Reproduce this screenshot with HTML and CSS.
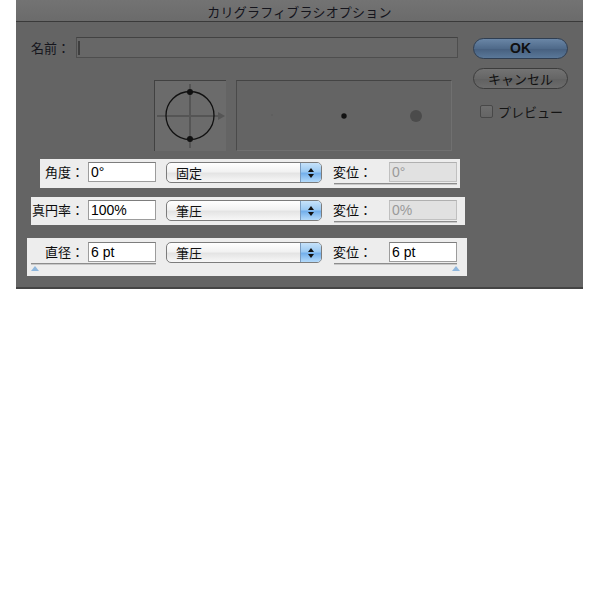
FILE: index.html
```html
<!DOCTYPE html>
<html lang="ja">
<head>
<meta charset="utf-8">
<title>カリグラフィブラシオプション</title>
<link rel="stylesheet" href="styles.css">
</head>
<body>
<div class="dialog">
  <div class="titlebar">カリグラフィブラシオプション</div>
  <div class="upper">
    <div class="left">
      <div class="name-row">
        <span class="name-label">名前：</span>
        <div class="name-input"><span class="caret"></span></div>
      </div>
      <div class="previews">
        <div class="pv pv-angle">
          <svg width="72" height="71" viewBox="0 0 72 71">
            <line x1="3" y1="36" x2="66" y2="36" stroke="#555" stroke-width="2"/>
            <polygon points="64,32 71,36 64,40" fill="#555"/>
            <line x1="36" y1="4" x2="36" y2="68" stroke="#555" stroke-width="2"/>
            <circle cx="36" cy="35.5" r="24" fill="none" stroke="#111" stroke-width="1.3"/>
            <circle cx="36" cy="12" r="3" fill="#111"/>
            <circle cx="36" cy="59" r="3" fill="#111"/>
          </svg>
        </div>
        <div class="pv pv-dots">
          <svg width="216" height="71" viewBox="0 0 216 71">
            <circle cx="36" cy="35" r="0.8" fill="#5a5a5a"/>
            <circle cx="108" cy="36" r="2.7" fill="#111"/>
            <circle cx="180" cy="36" r="6" fill="#4b4b4b"/>
          </svg>
        </div>
      </div>
    </div>
    <div class="side">
      <div class="btn btn-ok">OK</div>
      <div class="btn btn-cancel">キャンセル</div>
      <label class="preview-check"><span class="checkbox"></span>プレビュー</label>
    </div>
  </div>

  <div class="param param-angle">
    <span class="plabel">角度：</span>
    <div class="field">0°</div>
    <div class="select"><span class="sel-text">固定</span><span class="stepper"><span class="up"></span><span class="down"></span></span></div>
    <div class="group">
      <div class="group-line">
        <span class="vlabel">変位：</span>
        <div class="field disabled">0°</div>
      </div>
      <div class="track"></div>
    </div>
  </div>

  <div class="param param-round">
    <span class="plabel">真円率：</span>
    <div class="field">100%</div>
    <div class="select"><span class="sel-text">筆圧</span><span class="stepper"><span class="up"></span><span class="down"></span></span></div>
    <div class="group">
      <div class="group-line">
        <span class="vlabel">変位：</span>
        <div class="field disabled">0%</div>
      </div>
      <div class="track"></div>
    </div>
  </div>

  <div class="param param-diam">
    <div class="lgroup">
      <div class="group-line">
        <span class="plabel">直径：</span>
        <div class="field">6 pt</div>
      </div>
      <div class="track ltrack"></div>
      <span class="thumb thumb-left"></span>
    </div>
    <div class="select"><span class="sel-text">筆圧</span><span class="stepper"><span class="up"></span><span class="down"></span></span></div>
    <div class="group">
      <div class="group-line">
        <span class="vlabel">変位：</span>
        <div class="field">6 pt</div>
      </div>
      <div class="track"></div>
      <span class="thumb thumb-right"></span>
    </div>
  </div>
</div>
</body>
</html>
```

FILE: styles.css
```css
html, body {
  margin: 0;
  padding: 0;
  background: #ffffff;
}

body {
  font-family: "Noto Sans CJK JP", "Liberation Sans", sans-serif;
  font-size: 13px;
  color: #111;
}

.dialog {
  margin-left: 16px;
  width: 567px;
  background: #646464;
  padding-bottom: 11px;
  border-bottom: 2px solid #444;
}

.titlebar {
  height: 21px;
  line-height: 23px;
  border-bottom: 1px solid #3a3a3a;
  background: linear-gradient(#737373, #6b6b6b);
  text-align: center;
  font-size: 13px;
  color: #14141c;
  letter-spacing: 0.2px;
}

.upper {
  display: flex;
  padding: 15px 15px 0 15px;
}

.left {
  width: 427px;
  flex-shrink: 0;
}

.name-row {
  display: flex;
  align-items: center;
  height: 21px;
}

.name-label {
  width: 45px;
  flex-shrink: 0;
  color: #15151c;
  line-height: 21px;
}

.name-input {
  flex: 1;
  height: 19px;
  border: 1px solid #4e4e4e;
  border-top-color: #424242;
  background: #676767;
  display: flex;
  align-items: center;
}

.caret {
  width: 2px;
  height: 14px;
  margin-left: 1px;
  background: #3e3e3e;
}

.previews {
  display: flex;
  margin-top: 22px;
  margin-left: 123px;
  width: 314px;
  gap: 10px;
}

.pv {
  height: 71px;
  box-sizing: border-box;
  flex-shrink: 0;
}

.pv svg {
  display: block;
}

.pv-angle {
  width: 72px;
  background: #6b6b6b;
  border-top: 1px solid #414141;
  border-left: 1px solid #414141;
}

.pv-angle svg {
  margin: -1px 0 0 -1px;
}

.pv-dots {
  width: 216px;
  background: #646464;
  border-top: 1px solid #444;
  border-left: 1px solid #4a4a4a;
  border-right: 1px solid #707070;
  border-bottom: 1px solid #707070;
}

.pv-dots svg {
  margin: -1px 0 0 -1px;
}

.side {
  width: 95px;
  margin-left: 15px;
  padding-top: 1px;
  display: flex;
  flex-direction: column;
}

.btn {
  height: 19px;
  line-height: 19px;
  border-radius: 11px;
  text-align: center;
  font-family: "Liberation Sans", "Noto Sans CJK JP", sans-serif;
  font-size: 14px;
  color: #101010;
}

.btn-ok {
  background: linear-gradient(#6a86a6, #4f6a8a 50%, #465f7e 51%, #5a7899);
  border: 1px solid #2f3e52;
  font-weight: bold;
}

.btn-cancel {
  margin-top: 9px;
  background: linear-gradient(#737373, #666 50%, #606060 51%, #6c6c6c);
  border: 1px solid #3c3c3c;
  font-family: "Noto Sans CJK JP", sans-serif;
  font-size: 13px;
}

.preview-check {
  display: flex;
  align-items: center;
  margin-top: 14px;
  padding-left: 7px;
  color: #141414;
  font-size: 13px;
  height: 16px;
}

.checkbox {
  width: 11px;
  height: 11px;
  border: 1px solid #484848;
  border-radius: 2px;
  background: linear-gradient(#6e6e6e, #656565);
  margin-right: 5px;
}

/* parameter rows */
.param {
  display: flex;
  align-items: flex-start;
  background: #ededed;
  box-sizing: border-box;
}

.param-angle {
  margin-top: 8px;
  margin-left: 24px;
  width: 420px;
  height: 29px;
  padding-top: 3px;
}

.param-angle .plabel {
  width: 44px;
}

.param-round {
  margin-top: 9px;
  margin-left: 15px;
  width: 434px;
  height: 28px;
  padding-top: 3px;
}

.param-round .plabel {
  width: 53px;
}

.param-diam {
  margin-top: 13px;
  margin-left: 11px;
  width: 440px;
  height: 38px;
  padding-top: 4px;
}

.param-diam .plabel {
  width: 57px;
}

.plabel, .vlabel {
  flex-shrink: 0;
  text-align: right;
  line-height: 20px;
  height: 20px;
  color: #0c0c0c;
  margin-right: 4px;
}

.vlabel {
  width: 39px;
  text-align: left;
  margin-right: 17px;
}

.field {
  width: 68px;
  height: 20px;
  box-sizing: border-box;
  border: 1px solid #9c9c9c;
  border-top-color: #7d7d7d;
  background: #fff;
  font-family: "Liberation Sans", sans-serif;
  font-size: 14px;
  line-height: 18px;
  padding-left: 2px;
  color: #000;
  flex-shrink: 0;
}

.field.disabled {
  background: #e1e1e1;
  border-color: #c0c0c0;
  border-top-color: #b0b0b0;
  color: #9a9a9a;
}

.select {
  width: 156px;
  height: 21px;
  box-sizing: border-box;
  margin-left: 10px;
  margin-right: 11px;
  border: 1px solid #7c7c7c;
  border-radius: 5px;
  background: linear-gradient(#ffffff, #f2f2f2 45%, #e4e4e4 55%, #f7f7f7);
  display: flex;
  justify-content: space-between;
  flex-shrink: 0;
  overflow: hidden;
}

.sel-text {
  padding-left: 9px;
  line-height: 19px;
  color: #111;
}

.stepper {
  width: 20px;
  height: 19px;
  background: linear-gradient(#c6e2fa, #9ccaf3 45%, #74b0ec 55%, #b4dafa);
  border-left: 1px solid #7a9cc0;
  display: flex;
  flex-direction: column;
  align-items: center;
  justify-content: center;
  gap: 2px;
}

.stepper .up {
  width: 0;
  height: 0;
  border-left: 3px solid transparent;
  border-right: 3px solid transparent;
  border-bottom: 4px solid #111;
}

.stepper .down {
  width: 0;
  height: 0;
  border-left: 3px solid transparent;
  border-right: 3px solid transparent;
  border-top: 4px solid #111;
}

.group, .lgroup {
  display: flex;
  flex-direction: column;
  flex-shrink: 0;
}

.group-line {
  display: flex;
}

.track {
  height: 0;
  margin-top: 1px;
  margin-left: 1px;
  border-top: 1px solid #8c8c8c;
  border-bottom: 1px solid #c8c8c8;
}

.ltrack {
  margin-left: 4px;
}

.thumb {
  width: 0;
  height: 0;
  margin-top: 1px;
  border-left: 4px solid transparent;
  border-right: 4px solid transparent;
  border-bottom: 5px solid #8fb7dd;
}

.thumb-left {
  margin-left: 4px;
}

.thumb-right {
  align-self: flex-end;
  margin-right: -3px;
}
```
